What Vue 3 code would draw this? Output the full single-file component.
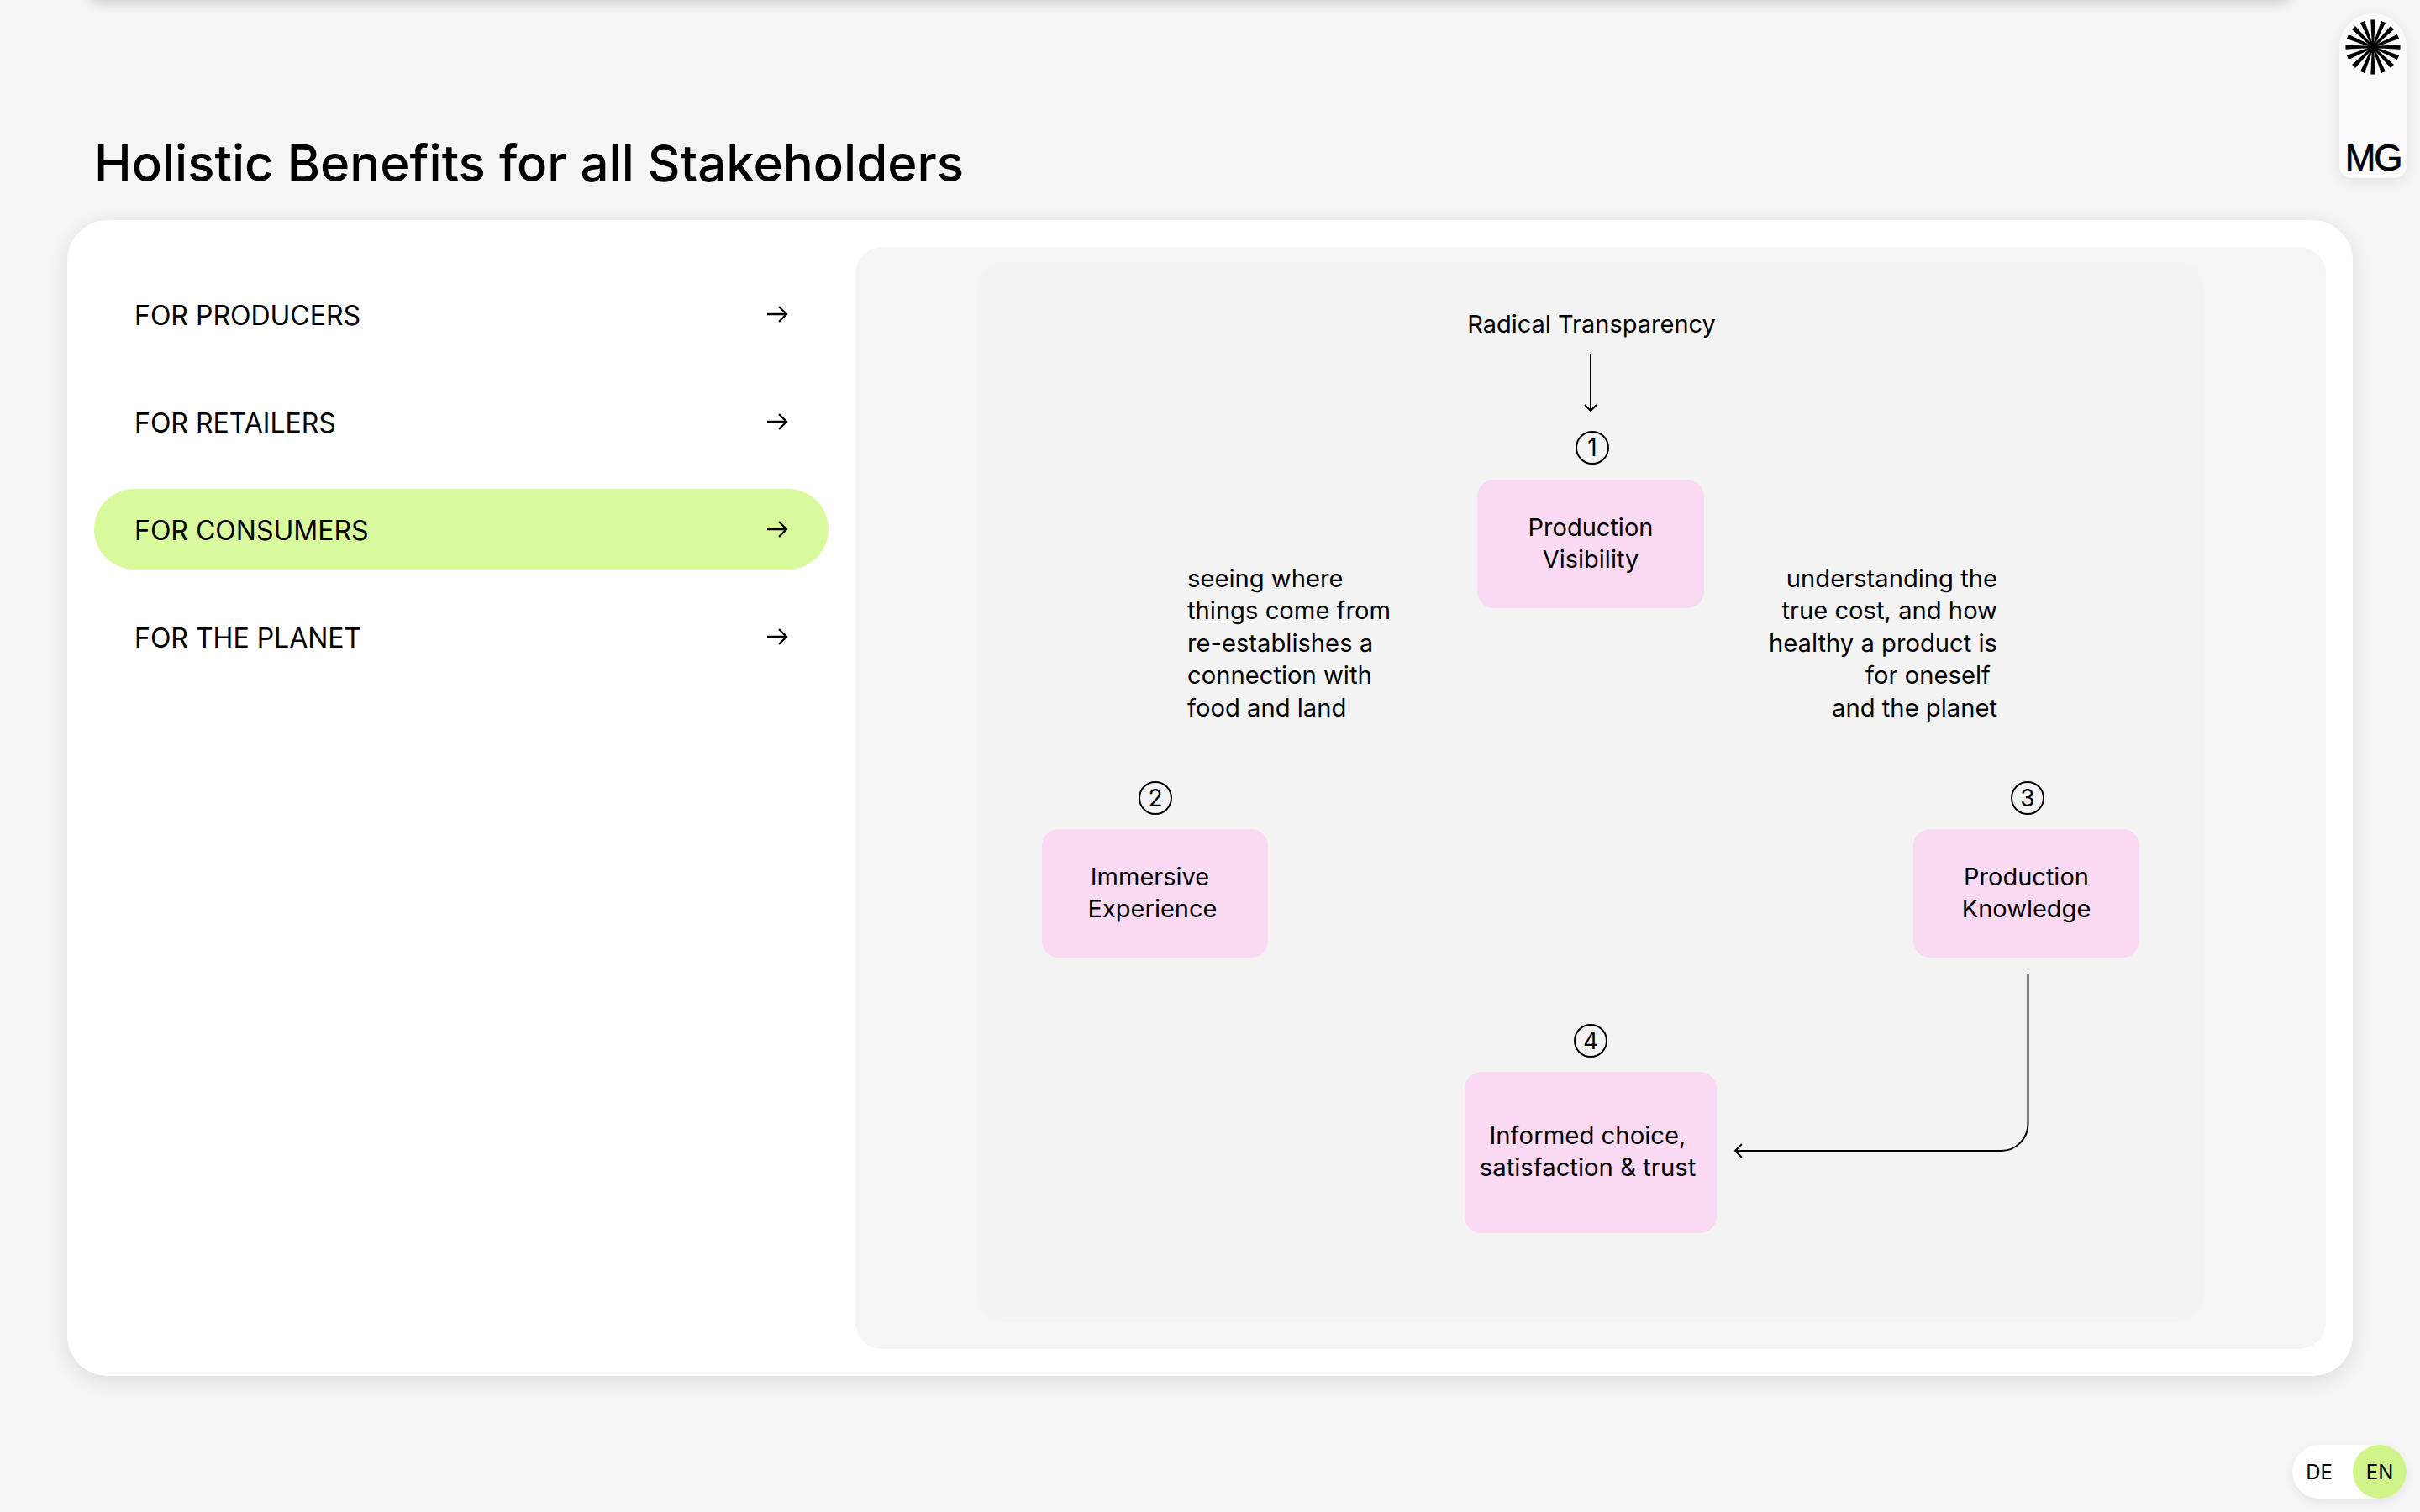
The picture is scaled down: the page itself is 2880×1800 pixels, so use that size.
<script setup>
const tabs = [
  { label: 'FOR PRODUCERS', active: false },
  { label: 'FOR RETAILERS', active: false },
  { label: 'FOR CONSUMERS', active: true },
  { label: 'FOR THE PLANET', active: false }
]
const rays = Array.from({ length: 16 }, (_, i) => i * 22.5)
</script>

<template>
  <div class="page">
    <div class="topbar"></div>

    <aside class="logo">
      <svg class="burst" width="66" height="66" viewBox="-33 -33 66 66">
        <polygon
          v-for="a in rays"
          :key="a"
          points="-2.7,-32.5 2.7,-32.5 1,0 -1,0"
          :transform="`rotate(${a})`"
          fill="#000"
        />
      </svg>
      <span class="mg">MG</span>
    </aside>

    <main class="content">
      <h1 class="title">Holistic Benefits for all Stakeholders</h1>
      <section class="card">
        <nav class="tabs">
          <div v-for="t in tabs" :key="t.label" class="tab" :class="{ active: t.active }">
            <span class="tab-label">{{ t.label }}</span>
            <svg width="26" height="24" viewBox="0 0 26 24" fill="none" stroke="#000" stroke-width="2.3">
              <path d="M1 12H24M15 3l9 9-9 9" />
            </svg>
          </div>
        </nav>
        <div class="panel">
          <div class="canvas">
            <div class="label radical">Radical Transparency</div>

            <svg class="lines" width="1459" height="1263" viewBox="0 0 1459 1263" fill="none" stroke="#000" stroke-width="2">
              <path d="M730 110V178M723 171l7 7 7-7" />
              <path d="M1250.500 848V1027a32 32 0 0 1-32 32H902M910 1051l-8 8 8 8" />
            </svg>

            <div class="num n1">1</div>
            <div class="num n2">2</div>
            <div class="num n3">3</div>
            <div class="num n4">4</div>

            <div class="box b1">Production<br />Visibility</div>
            <div class="box b2"><span class="shift">Immersive</span><br />Experience</div>
            <div class="box b3">Production<br />Knowledge</div>
            <div class="box b4">Informed choice,<br />satisfaction &amp; trust</div>

            <div class="label note left-note">seeing where<br />things come from<br />re-establishes a<br />connection with<br />food and land</div>
            <div class="label note right-note">understanding the<br />true cost, and how<br />healthy a product is<br />for oneself&nbsp;<br />and the planet</div>
          </div>
        </div>
      </section>
    </main>

    <div class="lang">
      <span class="de">DE</span>
      <span class="en">EN</span>
    </div>
  </div>
</template>

<style>
html, body { margin: 0; background: #f5f5f5; }
</style>

<style scoped>
.page {
  position: relative;
  width: 2880px;
  height: 1800px;
  overflow: hidden;
  background: #f5f5f5;
  font-family: Inter, "Liberation Sans", sans-serif;
  color: #000;
}
.topbar {
  position: absolute;
  left: 104px;
  right: 152px;
  top: -40px;
  height: 40px;
  border-radius: 16px;
  background: #fff;
  box-shadow: 0 2px 16px rgba(0, 0, 0, 0.2);
}
.content {
  display: flex;
  flex-direction: column;
  padding: 158px 80px 0;
}
.title {
  margin: 0 0 32px 32px;
  height: 72px;
  font-size: 60px;
  line-height: 72px;
  font-weight: 500;
}
.card {
  display: flex;
  gap: 32px;
  height: 1376px;
  box-sizing: border-box;
  padding: 32px;
  background: #fff;
  border-radius: 48px;
  box-shadow: 0 6px 24px rgba(0, 0, 0, 0.1);
}
.tabs {
  display: flex;
  flex-direction: column;
  gap: 32px;
  width: 874px;
  flex: none;
  padding-top: 32px;
}
.tab {
  display: flex;
  align-items: center;
  justify-content: space-between;
  height: 96px;
  padding: 0 48px;
  border-radius: 48px;
  font-size: 32px;
}
.tab-label { padding-top: 2px; }
.tab.active { background: #d9f99d; }
.panel {
  flex: 1;
  display: flex;
  padding: 17px 145px 32px;
  background: #f5f5f5;
  border-radius: 32px;
}
.canvas {
  position: relative;
  flex: 1;
  background: #f3f3f3;
  border-radius: 32px;
  font-size: 29px;
  line-height: 38px;
}
.lines { position: absolute; left: 0; top: 0; }
.label { position: absolute; white-space: nowrap; }
.note { font-size: 29.2px; line-height: 38.4px; }
.radical { left: 583px; top: 56px; width: 296px; text-align: center; }
.left-note { left: 250px; top: 359px; }
.right-note { right: 246px; top: 359px; text-align: right; }
.num {
  position: absolute;
  width: 36px;
  height: 36px;
  border: 2px solid #000;
  border-radius: 50%;
  display: flex;
  align-items: center;
  justify-content: center;
  font-size: 28px;
  line-height: 1;
}
.n1 { left: 712px; top: 202px; }
.n2 { left: 192px; top: 619px; }
.n3 { left: 1230px; top: 619px; }
.n4 { left: 710px; top: 908px; }
.box {
  position: absolute;
  box-sizing: border-box;
  background: #f9daf2;
  border-radius: 20px;
  text-align: center;
}
.b1 { left: 595px; top: 260px; width: 270px; height: 153px; padding-top: 38px; }
.b2 { left: 77px; top: 676px; width: 269px; height: 153px; padding: 38px 6px 0 0; }
.b3 { left: 1114px; top: 676px; width: 269px; height: 153px; padding-top: 38px; }
.b4 { left: 580px; top: 965px; width: 300px; height: 192px; padding: 57px 7px 0 0; white-space: nowrap; font-size: 29.3px; }
.shift { margin-left: -6px; }
.logo {
  position: absolute;
  left: 2784px;
  top: 16px;
  width: 80px;
  height: 196px;
  box-sizing: border-box;
  display: flex;
  flex-direction: column;
  align-items: center;
  justify-content: space-between;
  padding-top: 7px;
  background: #fafafa;
  border-radius: 40px 40px 14px 14px;
  box-shadow: 0 4px 16px rgba(0, 0, 0, 0.08);
}
.burst { display: block; }
.mg {
  font-family: "Liberation Sans", Arial, sans-serif;
  font-size: 44px;
  line-height: 52px;
  letter-spacing: -0.05em;
  margin-bottom: -2px;
  -webkit-text-stroke: 0.6px #000;
}
.lang {
  position: absolute;
  left: 2728px;
  top: 1720px;
  width: 136px;
  height: 64px;
  display: flex;
  align-items: center;
  justify-content: space-between;
  background: #fff;
  border-radius: 32px;
  box-shadow: 0 4px 12px rgba(0, 0, 0, 0.07);
  font-size: 24px;
}
.de { margin-left: 16px; width: 32px; text-align: center; }
.en {
  width: 64px;
  height: 64px;
  display: flex;
  align-items: center;
  justify-content: center;
  border-radius: 50%;
  background: #d1f48a;
}
</style>
